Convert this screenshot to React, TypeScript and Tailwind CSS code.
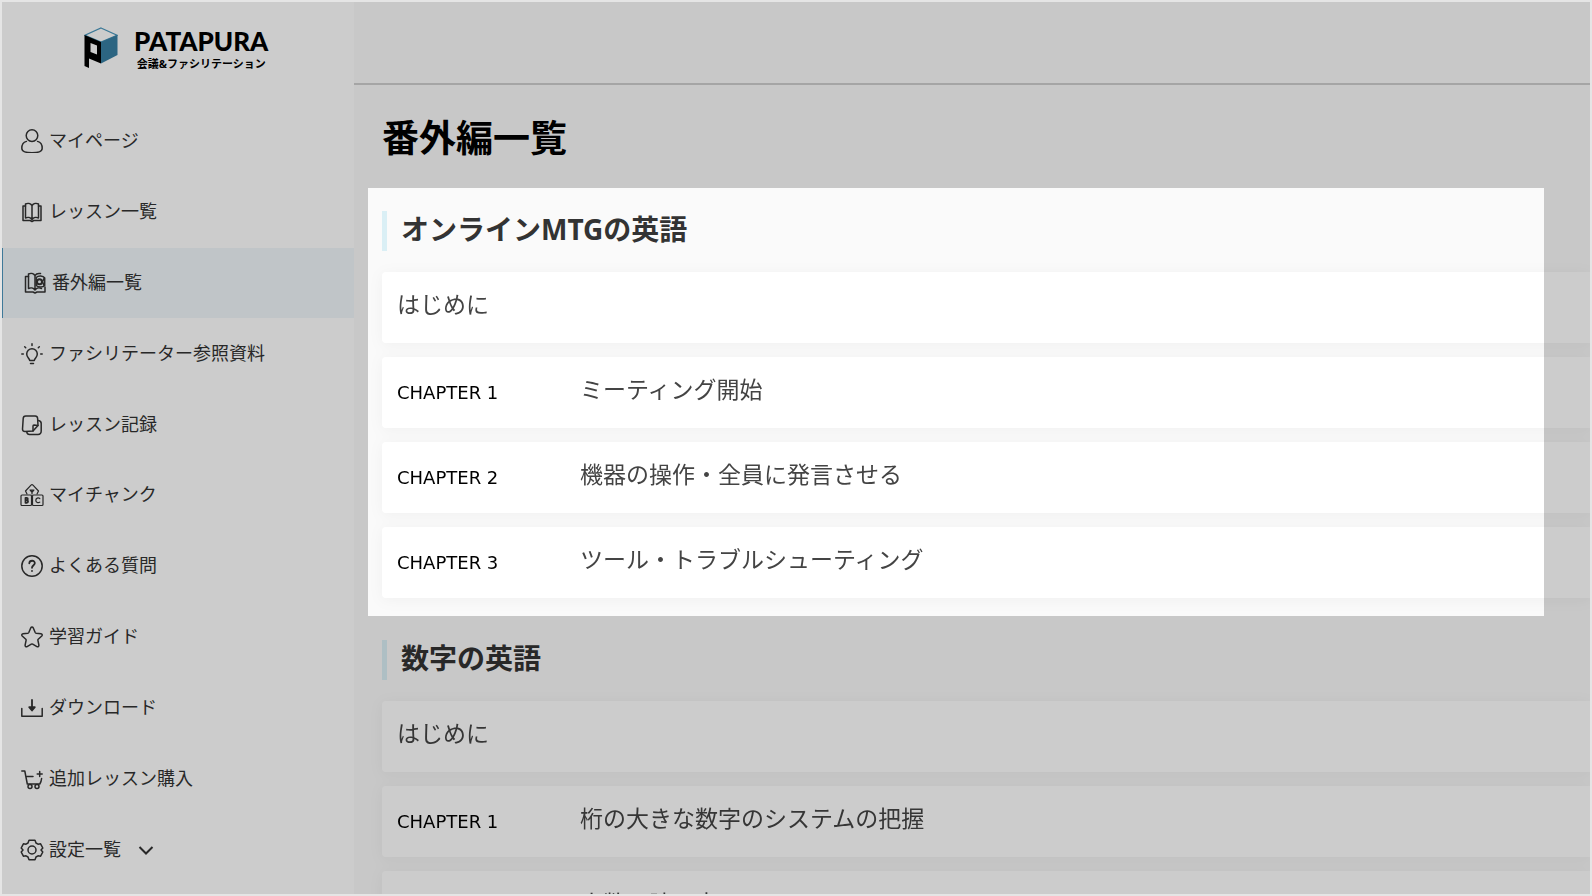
import type { ReactNode } from "react";

type NavItem = {
  label: string;
  icon: ReactNode;
  active?: boolean;
  expandable?: boolean;
};

type Chapter = {
  chapter?: string;
  title: string;
};

type Section = {
  heading: string;
  chapters: Chapter[];
};

function Icon({ children }: { children: ReactNode }) {
  return (
    <svg
      viewBox="0 0 24 24"
      className="size-6 shrink-0"
      fill="none"
      stroke="currentColor"
      strokeWidth="1.5"
      strokeLinecap="round"
      strokeLinejoin="round"
      aria-hidden="true"
    >
      {children}
    </svg>
  );
}

const navItems: NavItem[] = [
  {
    label: "マイページ",
    icon: (
      <Icon>
        <circle cx="12" cy="6.6" r="5.8" />
        <path d="M6.4 12.4C3.5 13.200 1.8 15.8 1.8 19.2c0 3 2.5 4.600 10.2 4.600s10.2-1.600 10.2-4.600c0-3.400-1.700-6-4.600-6.800" />
      </Icon>
    ),
  },
  {
    label: "レッスン一覧",
    icon: (
      <Icon>
        <path d="M12 5.500C10.500 3.300 7.500 3 5.500 4v14c2-1 5-.700 6.500 1.500 1.500-2.200 4.500-2.500 6.500-1.500V4c-2-1-5-.700-6.500 1.500v14" />
        <path d="M5.500 6H3v14.500h7.200l1.800 1 1.800-1H21V6h-2.500" />
      </Icon>
    ),
  },
  {
    label: "番外編一覧",
    active: true,
    icon: (
      <Icon>
        <path d="M12 4.500C10.500 2.300 7.500 2 5.500 3v14.500c2-1 5-.700 6.500 1.500 1.500-2.200 4.500-2.500 6.500-1.500M12 4.500V19M12 4.500c1.200-1.800 3.500-2.300 5.500-1.900" />
        <path d="M5.500 5.500H2.500v15.500h7.500l2 1 2-1h8V16" />
        <path d="M13.200 6.500c2-2 7-2 8.500.500v7.500c-1.500 2-6.500 2-8.500 0z" />
        <circle cx="16.500" cy="10.800" r="2.500" strokeWidth="2" />
        <path d="M21 7.500l-1.500 3.300 1.500 3.700" />
      </Icon>
    ),
  },
  {
    label: "ファシリテーター参照資料",
    icon: (
      <Icon>
        <path d="M9.700 18.500C9.500 16 6.700 15.500 6.700 12a5.300 5.300 0 0 1 10.600 0c0 3.500-2.800 4-3 6.500zM10.500 21.500h3" />
        <path d="M12 1.800v1.700M1.800 12h1.500M20.700 12h1.500M4.700 4.700l1 1M19.300 4.700l-1 1" />
      </Icon>
    ),
  },
  {
    label: "レッスン記録",
    icon: (
      <Icon>
        <path d="M5.800 3h9.400c1.500 0 2.300.800 2.400 2.300l.400 7.200-5 5.500-8 .500c-1.500 0-2.400-.800-2.500-2.300L3.200 5.600C3.200 4 4.200 3 5.800 3z" />
        <path d="M18 12.500l-4-.500c-.700 0-1 .300-1 1v5M18.500 7.500c1.700.200 2.700 1.300 2.700 3v7.500c0 2-1.200 3.400-3.200 3.400H9.500c-1.500 0-2.500-1-2.700-2.300" />
      </Icon>
    ),
  },
  {
    label: "マイチャンク",
    icon: (
      <Icon>
        <g strokeWidth="1.200">
          <path d="M7 11L5.500 8 11 2.200c.600-.600 1.400-.600 2 0L18.500 8 17 11" />
          <rect x="1" y="12" width="10.500" height="10.500" rx="1" />
          <rect x="12.500" y="12" width="10.500" height="10.500" rx="1" />
          <path d="M10 7h4l-2 2.500zM12 7v4" />
          <path d="M5.500 14.800v5h1.200c1.800 0 1.800-2.500 0-2.600 1.500-.100 1.500-2.400 0-2.400z" strokeWidth="1.800" />
          <path d="M19.800 15.500c-1.500-1.300-4-.400-4 1.800s2.500 3.100 4 1.800" />
        </g>
      </Icon>
    ),
  },
  {
    label: "よくある質問",
    icon: (
      <Icon>
        <circle cx="12" cy="12" r="10.200" />
        <path d="M9.300 9.300c.200-3.500 5.700-3.300 5.500 0-.100 1.900-2.800 2-2.800 4.500M12 16.800v.300" strokeWidth="1.800" />
      </Icon>
    ),
  },
  {
    label: "学習ガイド",
    icon: (
      <Icon>
        <path d="M10.800 2.800c.500-1 1.900-1 2.400 0l2 4.700c.200.400.500.600 1 .700l4.800.500c1.200.100 1.600 1.500.8 2.300l-3.600 3.300c-.300.300-.400.700-.300 1.100l1 4.800c.200 1.200-1 2-2 1.400l-4.200-2.400a1.400 1.400 0 0 0-1.400 0l-4.200 2.400c-1 .600-2.200-.200-2-1.400l1-4.800c.100-.400 0-.800-.300-1.100L2.200 11c-.800-.800-.400-2.200.8-2.300l4.800-.500c.500-.100.800-.300 1-.700z" />
      </Icon>
    ),
  },
  {
    label: "ダウンロード",
    icon: (
      <Icon>
        <path d="M1.800 12.500v7.700h20.400v-7.700" />
        <path d="M12 4v10M9.200 11.200L12 14.500l2.800-3.300z" strokeWidth="1.800" />
      </Icon>
    ),
  },
  {
    label: "追加レッスン購入",
    icon: (
      <Icon>
        <path d="M1.800 4h3l2.500 13h12.500c1-1.500 1.600-3.500 1.800-5.500M7 9.500h6M19.700 4.500v5M17.200 7h5" />
        <circle cx="10" cy="19.500" r="2" />
        <circle cx="17" cy="19.500" r="2" />
      </Icon>
    ),
  },
  {
    label: "設定一覧",
    expandable: true,
    icon: (
      <Icon>
        <circle cx="12" cy="12" r="4" />
        <path d="M9 2.300h6l1 2.700 2 1.200 2.600-.400 2.200 4.200-1.800 2 1.800 2-2.200 4.200-2.600-.400-2 1.200-1 2.700H9L8 19l-2-1.200-2.600.400L1.200 14 3 12l-1.800-2 2.200-4.200 2.600.400L8 5z" />
      </Icon>
    ),
  },
];

const sections: Section[] = [
  {
    heading: "オンラインMTGの英語",
    chapters: [
      { title: "はじめに" },
      { chapter: "CHAPTER 1", title: "ミーティング開始" },
      { chapter: "CHAPTER 2", title: "機器の操作・全員に発言させる" },
      { chapter: "CHAPTER 3", title: "ツール・トラブルシューティング" },
    ],
  },
  {
    heading: "数字の英語",
    chapters: [
      { title: "はじめに" },
      { chapter: "CHAPTER 1", title: "桁の大きな数字のシステムの把握" },
      { chapter: "CHAPTER 2", title: "小数の読み方" },
    ],
  },
];

function Logo() {
  return (
    <a href="#" className="flex h-[104px] items-start gap-4 pt-6 pl-[82px] text-black">
      <svg viewBox="0 0 34 42" className="mt-px h-[42px] w-[34px]" aria-hidden="true">
        <path d="M17 1L33 8.200 17 15 1 8.200z" fill="#fff" stroke="#4a97bd" strokeWidth="1.200" />
        <path d="M17 15L33.500 8v20L17 36.500z" fill="#387fa3" />
        <path d="M.500 8L17 15v21.500L5 31.500V41L.500 39z" fill="#000" />
        <path d="M6.500 16l6.500 2.600v9L6.500 25z" fill="#fff" />
      </svg>
      <span className="flex flex-col items-center">
        <span className="font-[Lato,sans-serif] text-[26px] leading-[30px] font-black">PATAPURA</span>
        <span className="text-[11px] leading-4 font-bold">会議&ファシリテーション</span>
      </span>
    </a>
  );
}

function Sidebar() {
  return (
    <aside className="flex w-[352px] shrink-0 flex-col bg-white">
      <Logo />
      <nav className="flex flex-1 flex-col pb-[9px]">
        {navItems.map((item) => (
          <a
            key={item.label}
            href="#"
            className={
              item.active
                ? "flex flex-1 items-center gap-[5px] border-l border-[#4f98c0] bg-[#f0f7fa] pl-5 text-lg text-[#333]"
                : "flex flex-1 items-center gap-[5px] pl-[18px] text-lg text-[#333]"
            }
          >
            {item.icon}
            <span className="pb-0.5">{item.label}</span>
            {item.expandable && (
              <svg
                viewBox="0 0 16 16"
                className="ml-3 size-4"
                fill="none"
                stroke="currentColor"
                strokeWidth="2"
                aria-hidden="true"
              >
                <path d="M1.500 5L8 11.500 14.500 5" />
              </svg>
            )}
          </a>
        ))}
      </nav>
    </aside>
  );
}

function ChapterSection({ heading, chapters }: Section) {
  return (
    <section>
      <h2 className="mb-[21px] border-l-[5px] border-[#daeff5] pb-1 pl-[14px] text-[28px] leading-9 font-bold text-[#333]">
        {heading}
      </h2>
      <ul className="flex flex-col gap-[14px] drop-shadow-[0_2px_7px_rgba(0,0,0,0.04)]">
        {chapters.map((row) => (
          <li key={row.title}>
            <a href="#" className="flex h-[71px] items-center rounded-l-sm bg-white pl-[15px]">
              {row.chapter && (
                <span className="w-[183px] font-['DejaVu_Sans',sans-serif] text-lg text-black">
                  {row.chapter}
                </span>
              )}
              <span className="pb-2 text-[23px] leading-8 text-[#444]">{row.title}</span>
            </a>
          </li>
        ))}
      </ul>
    </section>
  );
}

export default function App() {
  return (
    <div className="h-screen border-2 border-[#e5e5e5] font-['Noto_Sans','Noto_Sans_CJK_JP',sans-serif]">
      <div className="relative flex h-full overflow-hidden">
        <Sidebar />
        <div className="min-w-0 flex-1 bg-[#fafafa]">
          <header className="h-[83px] border-b-2 border-[#cfcfcf]" />
          <main className="pl-7">
            <h1 className="pt-7 pb-12 text-[37px] leading-[50px] font-bold text-black">番外編一覧</h1>
            <div className="flex flex-col gap-[42px]">
              {sections.map((section) => (
                <ChapterSection key={section.heading} {...section} />
              ))}
            </div>
          </main>
        </div>
        {/* spotlight on the first section, everything around it dimmed */}
        <div className="pointer-events-none absolute top-[186px] right-[46px] left-[366px] h-[428px] shadow-[0_0_0_2000px_rgba(0,0,0,0.2)]" />
      </div>
    </div>
  );
}
